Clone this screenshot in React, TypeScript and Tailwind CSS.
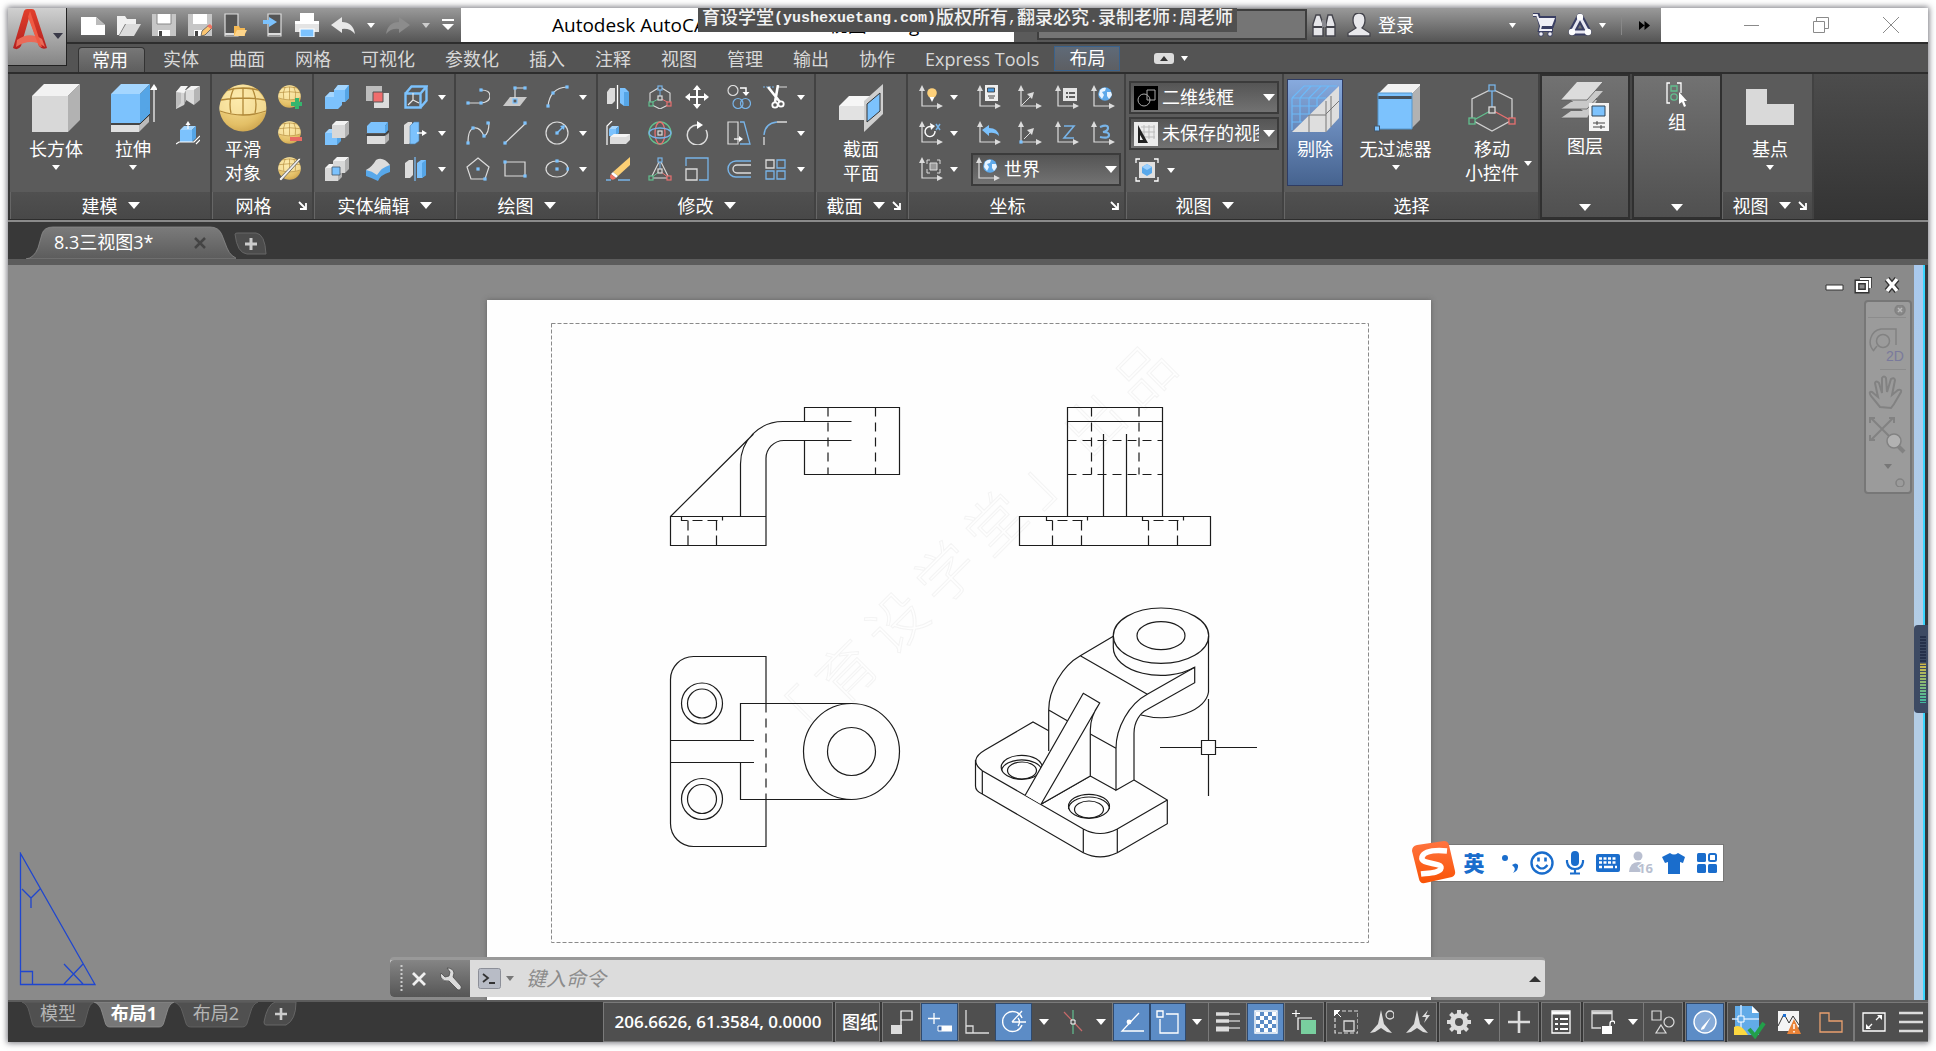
import type { ReactNode } from 'react'
import clsx from 'clsx'

const BLUE = '#7cc2fd'
const LINE = '#78b4e8'
const LIGHT = '#dcdcdc'
const GREEN = '#62c08f'
const RED = '#e87070'

type IconProps = { children: ReactNode; size?: number; box?: number }

function Icon({ children, size = 24, box = 24 }: IconProps) {
  return (
    <svg width={size} height={size} viewBox={`0 0 ${box} ${box}`} fill="none" className="shrink-0" aria-hidden="true">
      {children}
    </svg>
  )
}

function Tri({ w = 8, h = 5, color = '#fff' }: { w?: number; h?: number; color?: string }) {
  return (
    <svg width={w} height={h} viewBox="0 0 8 5" preserveAspectRatio="none" className="shrink-0" aria-hidden="true">
      <path d="M0 0h8L4 5z" fill={color} />
    </svg>
  )
}

function Dot({ x, y, c = BLUE }: { x: number; y: number; c?: string }) {
  return <rect x={x - 1.6} y={y - 1.6} width="3.2" height="3.2" fill={c} />
}

function Box({ x, y, c }: { x: number; y: number; c: string }) {
  return <rect x={x - 2} y={y - 2} width="4" height="4" fill="#5b5b5b" stroke={c} strokeWidth="1.2" />
}

function Cube({ x, y, s, d, c = 'blue' }: { x: number; y: number; s: number; d: number; c?: 'blue' | 'grey' }) {
  const [front, top, side] = c === 'blue' ? [BLUE, '#a4d6ff', '#55a5e6'] : ['#d8d8d8', '#f2f2f2', '#b2b2b2']
  return (
    <g>
      <path d={`M${x} ${y + d}h${s}v${s}h${-s}z`} fill={front} />
      <path d={`M${x} ${y + d}l${d} ${-d}h${s}l${-d} ${d}z`} fill={top} />
      <path d={`M${x + s} ${y + d}l${d} ${-d}v${s}l${-d} ${d}z`} fill={side} />
    </g>
  )
}

function Ball() {
  return (
    <g>
      <circle cx="24" cy="24" r="23.5" fill="url(#gold)" />
      <path d="M1 28a60 24 0 0 1 0-8C4 10 13 1 24 .6 35 1 44 10 47 20v8q-11 3-23 3T1 28z" fill="#fff0b8" opacity=".55" />
      <path d="M24 4v27M15 4q-6 12-3 25M33 4q6 12 3 25M2 16q22-4 44 0M9 6q15-4 30 0M1 27q23 8 46 0" stroke="#b08838" strokeWidth="1.3" />
    </g>
  )
}

function SmallBall({ children }: { children: ReactNode }) {
  return (
    <Icon>
      <g transform="scale(.48)">
        <Ball />
      </g>
      {children}
    </Icon>
  )
}

function Axes({ children }: { children?: ReactNode }) {
  return (
    <Icon>
      <path d="M3 5v16h16" stroke={LIGHT} strokeWidth="1.2" />
      <path d="M0 6l3-6 3 6zM18 18l6 3-6 3z" fill={LIGHT} />
      {children}
    </Icon>
  )
}

function Globe() {
  return (
    <g>
      <circle cx="14" cy="9" r="6.8" fill="#5ea9ea" />
      <path d="M9 5q3-3 6-2l-1 3-3 1 2 3-2 4-3-4zM16 7l4 0 1 3-3 4-2-3z" fill="#e8f4ff" />
    </g>
  )
}

const modelSmall = [
  { label: '多段体', icon: <Icon><path d="M0 7v17l8-4 2-5h8V5H9z" fill="#d4d4d4" /><path d="M0 7l5-6v17l-5 6z" fill="#bdbdbd" /><path d="M18 5l6-4v14l-6 5z" fill="#b5b5b5" /><path d="M8 20V9l2-4v10z" fill="#a8a8a8" /><path d="M0 7l5-6h7l-3 4h9l6-4h-9l-5 4-2 3-8-1z" fill="#f4f4f4" /><path d="M10 5h8v15l-8-5z" fill={LIGHT} /></Icon> },
  { label: '按住并拖动', icon: <Icon><Cube x={4} y={5} s={12} d={4} /><path d="M12 8V2M0 23l3-2h15l6-6M20 23l4-4" stroke="#fff" strokeWidth="1.2" /><path d="M9.500 4L12 0l2.500 4z" fill="#fff" /></Icon> },
]

const meshSmall = [
  { label: '提高平滑度', icon: <SmallBall><path d="M17 13h4v4h3.500v4H21v3.500h-4V21h-4v-4h4z" fill="#35b56e" /></SmallBall> },
  { label: '降低平滑度', icon: <SmallBall><path d="M12 16h12v4H12z" fill="#e96a63" /></SmallBall> },
  { label: '优化网格', icon: <SmallBall><path d="M1 22L21 1l2 1L3 24z" fill="#eee" stroke="#555" strokeWidth=".8" /></SmallBall> },
]

const solidEdit = [
  { label: '并集', icon: <Icon><path d="M0 12l5-5h4V5l4-5h11v13l-4 4h-3v3l-4 4H0z" fill={BLUE} /><path d="M9 5l4-5h11l-4 5zM0 12l5-5h4v5z" fill="#a4d6ff" /><path d="M20 5l4-5v13l-4 4z" fill="#55a5e6" /></Icon> },
  { label: '差集', icon: <Icon><path d="M0 1h16v15H0z" fill="#bdbdbd" /><path d="M8 8h15v15H8z" fill={LIGHT} /><path d="M7 7h10v10H7z" fill="#f06d6d" stroke="#555" /></Icon> },
  { label: '提取边', icon: <Icon><path d="M1.500 8.500h15v14h-15zM1.500 8.500l6-7h15l-6 7M22.500 1.500v14l-6 7" stroke={BLUE} strokeWidth="2.400" /><path d="M9 8v7l-5 5M9 15l6 3" stroke="#e8e8e8" strokeWidth="1.200" /></Icon> },
  { label: '交集', icon: <Icon><Cube x={0} y={8} s={12} d={4} /><Cube x={7} y={0} s={13} d={4} c="grey" /></Icon> },
  { label: '剖切', icon: <Icon><path d="M1 5l4-4h17l-3 4v7H1z" fill={BLUE} /><path d="M19 5l3-4v8l-3 4z" fill="#55a5e6" /><path d="M1 15h18v8H1z" fill={LIGHT} /><path d="M19 15l4-3v7l-4 4z" fill="#b2b2b2" /><path d="M0 14h18l5-4" stroke="#333" /></Icon> },
  { label: '拉伸面', icon: <Icon><path d="M0 4l4-3h4v20l-3 2H0z" fill={LIGHT} /><path d="M6 5l4-4h5v19l-4 3H6z" fill={BLUE} stroke="#4c7fae" strokeWidth=".6" /><path d="M13 12h7" stroke="#fff" strokeWidth="1.400" /><path d="M18 9l5 3-5 3z" fill="#fff" /></Icon> },
  { label: '干涉', icon: <Icon><Cube x={0} y={7} s={13} d={4} c="grey" /><Cube x={8} y={0} s={12} d={4} c="grey" /><path d="M7 10h8v8H7z" fill={BLUE} stroke="#456" strokeWidth=".8" /></Icon> },
  { label: '加厚', icon: <Icon><path d="M0 13v6q6 2 12 5 2-6 12-9V8z" fill="#58a8ea" /><path d="M0 13Q6 10 10 3q7-4 14 5-8 2-13 10-5-4-11-5z" fill={LIGHT} /></Icon> },
  { label: '分割', icon: <Icon><path d="M1 6l4-3h4v15l-3 3H1z" fill={LIGHT} /><path d="M13 6l4-3h5v15l-4 3h-5z" fill={BLUE} /><path d="M18 6l4-3v15l-4 3z" fill="#55a5e6" /><path d="M11 0v24" stroke={BLUE} strokeWidth="1.200" /></Icon> },
]

const draw = [
  { label: '多段线', icon: <Icon><path d="M2 18h13q9-1 9-7t-9-6" stroke={LIGHT} strokeWidth="1.200" /><Dot x={2} y={18} /><Dot x={15} y={18} /><Dot x={15} y={5} /></Icon> },
  { label: '平面曲面', icon: <Icon><path d="M7 12h17l-7 9H0z" fill="#c9c9c9" /><path d="M12 15V3h10" stroke={LIGHT} strokeWidth="1.200" /><Dot x={12} y={3} /><Dot x={22} y={3} /><Box x={12} y={16} c={BLUE} /></Icon> },
  { label: '圆弧', icon: <Icon><path d="M3 21Q5 3 22 2" stroke={LIGHT} strokeWidth="1.200" /><Dot x={3} y={21} /><Dot x={8} y={8} /><Dot x={22} y={2} /></Icon> },
  { label: '样条曲线', icon: <Icon><path d="M2 22Q2 8 8 7t10 8q5-2 5-14" stroke={LIGHT} strokeWidth="1.200" /><Dot x={2} y={22} /><Dot x={7} y={7} /><Dot x={18} y={15} /><Dot x={22} y={2} /></Icon> },
  { label: '直线', icon: <Icon><path d="M2 22L23 2" stroke={LIGHT} strokeWidth="1.200" /><Dot x={2} y={22} /><Dot x={22} y={2} /></Icon> },
  { label: '圆', icon: <Icon><circle cx="12" cy="12" r="11" stroke={LIGHT} strokeWidth="1.200" /><path d="M12 12l6-6" stroke={BLUE} strokeWidth="1.400" /><path d="M15 5l5-1-1 5z" fill={BLUE} /><Dot x={12} y={12} /></Icon> },
  { label: '多边形', icon: <Icon><path d="M12 1l11 9-4 12H5L1 10z" stroke={LIGHT} strokeWidth="1.200" /><Dot x={12} y={12} /><Dot x={19} y={22} /></Icon> },
  { label: '矩形', icon: <Icon><path d="M2 5h20v14H2z" stroke={LIGHT} strokeWidth="1.200" /><Dot x={2} y={5} /><Dot x={22} y={19} /></Icon> },
  { label: '椭圆', icon: <Icon><ellipse cx="12" cy="12" rx="11" ry="8" stroke={LIGHT} strokeWidth="1.200" /><Dot x={12} y={12} /><Dot x={12} y={4} /><Dot x={23} y={12} /></Icon> },
]

const modify = [
  { label: '三维镜像', icon: <Icon><path d="M1 7l3-4h5v13l-3 3H1z" fill={LIGHT} /><path d="M14 3h5l4 4v14h-5l-4-3z" fill={BLUE} /><path d="M18 7h5v14h-5z" fill="#55a5e6" /><path d="M11.500 0v24" stroke="#fff" strokeWidth="1.300" /></Icon> },
  { label: '三维移动', icon: <Icon><path d="M12 2l10 6v11l-10 5-10-5V8z" stroke={LIGHT} strokeWidth="1.100" /><path d="M12 4v8" stroke={LINE} /><path d="M12 13l9 5" stroke={RED} /><path d="M12 13l-9 5" stroke={GREEN} /><Box x={12} y={3} c={LINE} /><Box x={12} y={13} c={LIGHT} /><Box x={3} y={19} c={GREEN} /><Box x={21} y={19} c={RED} /></Icon> },
  { label: '移动', icon: <Icon><path d="M12 3v18M3 12h18" stroke="#fff" strokeWidth="2" /><path d="M8 5l4-5 4 5zM8 19l4 5 4-5zM5 8l-5 4 5 4zM19 8l5 4-5 4z" fill="#fff" /></Icon> },
  { label: '复制', icon: <Icon><circle cx="6" cy="5.500" r="5" stroke={LIGHT} strokeWidth="1.200" /><circle cx="11" cy="18.500" r="5" stroke={LINE} strokeWidth="1.200" /><circle cx="18.500" cy="18.500" r="5" stroke={LINE} strokeWidth="1.200" /><path d="M13 3h6v5" stroke="#fff" strokeWidth="1.500" /><path d="M15.500 7h7L19 11z" fill="#fff" /></Icon> },
  { label: '修剪', icon: <Icon><path d="M0 2h12" stroke={LINE} strokeDasharray="2 1" /><path d="M14 2h10" stroke={LIGHT} /><path d="M5 2l12 15M15 0l-3 17" stroke="#fff" strokeWidth="2.600" /><circle cx="12" cy="20" r="2.700" stroke="#fff" strokeWidth="1.800" /><circle cx="18" cy="19" r="2.700" stroke="#fff" strokeWidth="1.800" /></Icon> },
  { label: '三维对齐', icon: <Icon><path d="M1 24V5l5-5" stroke="#fff" strokeWidth="1.200" /><Cube x={3} y={5} s={7} d={3} /><path d="M4 16l4-3h16v6l-4 4H4z" fill={LIGHT} /><path d="M4 16l4-3h16l-4 3z" fill="#f4f4f4" /></Icon> },
  { label: '三维旋转', icon: <Icon><circle cx="12" cy="12" r="11" stroke={GREEN} strokeWidth="1.300" /><ellipse cx="12" cy="12" rx="5" ry="11" stroke={RED} strokeWidth="1.300" /><ellipse cx="12" cy="12" rx="11" ry="5" stroke={LINE} strokeWidth="1.300" /><Box x={12} y={12} c={LIGHT} /></Icon> },
  { label: '旋转', icon: <Icon><path d="M15 4h-2a10 10 0 1 0 8 5" stroke={LIGHT} strokeWidth="1.500" /><path d="M12 0l6 4-6 4z" fill="#fff" /></Icon> },
  { label: '拉伸', icon: <Icon><path d="M1 1h10v22H1z" stroke={LIGHT} strokeWidth="1.200" /><path d="M13 1h4l6 22H13" stroke={LINE} strokeWidth="1.300" /><path d="M7 18h6" stroke="#fff" strokeWidth="1.300" /><path d="M12 15l4 3-4 3z" fill="#fff" /></Icon> },
  { label: '圆角', icon: <Icon><path d="M1 24V16M14 1h10" stroke={LIGHT} strokeWidth="1.300" /><path d="M1 14Q2 2 14 1" stroke={LINE} strokeWidth="1.400" /></Icon> },
  { label: '删除', icon: <Icon><path d="M0 23h5M12 23h12" stroke={LINE} strokeWidth="1.300" /><path d="M24 0v8L12 19l-5-4z" fill="#fccf74" /><path d="M7 15l5 4-2 2-5-4z" fill="#fff" /><path d="M5 17l5 4q-3 3-5 1t0-5z" fill="#ef7565" /></Icon> },
  { label: '三维缩放', icon: <Icon><path d="M12 3L3 21h18z" stroke={LIGHT} strokeWidth="1.100" /><path d="M12 4v9" stroke={LINE} /><path d="M12 14l9 7" stroke={RED} /><path d="M12 14l-9 7" stroke={GREEN} /><Box x={12} y={3} c={LINE} /><Box x={12} y={14} c={LIGHT} /><Box x={3} y={21} c={GREEN} /><Box x={21} y={21} c={RED} /></Icon> },
  { label: '缩放', icon: <Icon><path d="M1 9V1h22v22h-9" stroke={LINE} strokeWidth="1.300" /><path d="M1 12h11v11H1z" stroke={LIGHT} strokeWidth="1.300" /></Icon> },
  { label: '偏移', icon: <Icon><path d="M24 4H9a8 8 0 0 0 0 16h15" stroke={LINE} strokeWidth="1.400" /><path d="M24 8H10a4 4 0 0 0 0 8h14" stroke={LIGHT} strokeWidth="1.400" /></Icon> },
  { label: '阵列', icon: <Icon><path d="M3 3h8v8H3z" stroke={LIGHT} strokeWidth="1.300" /><path d="M14 3h8v8h-8zM3 14h8v8H3zM14 14h8v8h-8z" stroke={LINE} strokeWidth="1.300" /></Icon> },
]

const coords = [
  { label: 'UCS 图标', icon: <Axes><circle cx="13" cy="8" r="4.800" fill="#fdd07a" /><path d="M10.500 12h5l-2.500 5z" fill="#fff" /></Axes> },
  null,
  { label: 'UCS 特性', icon: <Axes><path d="M8 0h13v16H8z" fill="#eee" /><path d="M10.500 3h7v4h-7z" fill="#4b9be0" stroke="#333" strokeWidth=".8" /><path d="M11 11h7M12 13h5" stroke="#444" /></Axes> },
  { label: '三点', icon: <Axes><path d="M4 20L14 10" stroke={LIGHT} /><path d="M9 9l7-2-2 7z" fill={LIGHT} /></Axes> },
  { label: '命名 UCS', icon: <Axes><path d="M8 3h14v13H8z" fill="#e4e4e4" /><path d="M11 8h2M14 8h6M11 12h2M14 12h6" stroke="#333" strokeWidth="1.400" /></Axes> },
  { label: '世界', icon: <Axes><Globe /></Axes> },
  { label: '绕 X 轴', icon: <Axes><path d="M13 6a5 5 0 1 0 3 4" stroke="#fff" strokeWidth="1.400" /><path d="M11 2l5 3-4 4z" fill="#fff" /><path d="M17 3l4 6M21 3l-4 6" stroke={LINE} strokeWidth="1.500" /></Axes> },
  null,
  { label: '上一个', icon: <Axes><path d="M5 9l7-5v3q9 0 10 8-4-4-10-3v3z" fill={BLUE} /></Axes> },
  { label: '原点', icon: <Axes><path d="M6 18l8-8" stroke={LIGHT} /><path d="M9 9l7-2-2 7z" fill={LIGHT} /><Dot x={3} y={21} /></Axes> },
  { label: 'Z 轴矢量', icon: <Axes><path d="M9 5h10L9 17h10" stroke={LINE} strokeWidth="1.600" /></Axes> },
  { label: '3 点', icon: <Axes><path d="M9 6q8-3 8 1 0 3-5 4 6 0 6 3 0 4-9 2" stroke={LINE} strokeWidth="2.200" /></Axes> },
  { label: '视图', icon: <Axes><path d="M11 6h7v7h-7z" fill="#999" stroke={LIGHT} /><path d="M8 7V3h3M18 3h3v4M21 12v4h-3M11 16H8v-4" stroke={LIGHT} /></Axes> },
  null,
]

const menuTabs = ['常用', '实体', '曲面', '网格', '可视化', '参数化', '插入', '注释', '视图', '管理', '输出', '协作', 'Express Tools', '布局']

const quickAccess = [
  { label: '新建', icon: <Icon><path d="M0 4h15l9 8v10H0z" fill="#fff" /><path d="M15 4v8h9z" fill="#bbb" /></Icon> },
  { label: '打开', icon: <Icon><path d="M0 3h8l2 3h9v5H8L2 22H0z" fill="#f0f0f0" /><path d="M9 11h15l-7 12H2z" fill="#dcdcdc" /></Icon> },
  { label: '保存', icon: <Icon><path d="M0 1h24v22H0z" fill="#c6c6c6" /><path d="M5 1h14v10H5zM6 17h12v6H6z" fill="#fff" /><path d="M7 18h3v5H7z" fill="#444" /><path d="M5 1v10h14V1" stroke="#888" /></Icon> },
  { label: '另存为', icon: <Icon><path d="M0 1h24v22H0z" fill="#c6c6c6" /><path d="M5 1h14v10H5zM6 17h8v6H6z" fill="#fff" /><path d="M7 18h3v5H7z" fill="#444" /><path d="M13 23l1-5 7-6 3 3-7 7z" fill="#fcc672" stroke="#555" strokeWidth=".8" /><path d="M19 13l3-2 3 3-2 2z" fill="#ee7464" /></Icon> },
  { label: '从移动设备打开', icon: <Icon><path d="M1 1h13v22H1z" fill="#555" stroke="#ddd" strokeWidth="1.200" /><path d="M1 21h13" stroke="#ddd" strokeWidth="2" /><path d="M10 13h5l1 2h5v8H10z" fill="#f5b954" /><path d="M13 17h10l-3 6H10z" fill="#fdd58b" /></Icon> },
  { label: '保存到移动设备', icon: <Icon><path d="M8 1h13v22H8z" fill="#555" stroke="#ddd" strokeWidth="1.200" /><path d="M8 21h13" stroke="#ddd" strokeWidth="2" /><path d="M3 7h6V4l8 5-8 5v-3H3z" fill={BLUE} /></Icon> },
  { label: '打印', icon: <Icon><path d="M5 0h14v10H5z" fill="#fff" /><path d="M0 8h24v11H0z" fill="#e4e4e4" /><path d="M0 8h24v3H0z" fill="#fff" /><path d="M5 16h14v8H5z" fill={BLUE} stroke="#fff" strokeWidth="1.200" /></Icon> },
  { label: '放弃', icon: <Icon><path d="M0 12l11-8v5q11 0 13 12-5-6-13-5v4z" fill="#e8e8e8" /></Icon> },
]

function ToolBtn({ label, children, className }: { label: string; children: ReactNode; className?: string }) {
  return (
    <button type="button" aria-label={label} className={clsx('flex shrink-0 items-center justify-center', className)}>
      {children}
    </button>
  )
}

function BigButton({ icon, lines, arrow, className }: { icon: ReactNode; lines: string[]; arrow?: boolean; className?: string }) {
  return (
    <button type="button" className={clsx('flex flex-col items-center pt-[10px] text-center', className)}>
      {icon}
      <span className="mt-[5px] whitespace-nowrap leading-6">
        {lines.map((l) => (
          <span key={l} className="block">{l}</span>
        ))}
      </span>
      {arrow && <span className="mt-[4px] flex"><Tri /></span>}
    </button>
  )
}

type PanelProps = { title: string; arrow?: boolean; launcher?: boolean; className: string; body?: string; children: ReactNode }

function Panel({ title, arrow, launcher, className, body, children }: PanelProps) {
  return (
    <section className={clsx('flex shrink-0 flex-col border-r-2 border-[#424242] bg-[#5b5b5b]', className)}>
      <div className={clsx('flex-1', body ?? 'flex')}>{children}</div>
      <div className="flex h-[27px] items-center border-l border-[#666] bg-linear-to-b from-[#505050] to-[#484848] px-1">
        <button type="button" className={clsx('flex flex-1 items-center justify-center gap-[10px] whitespace-nowrap leading-6', launcher && !arrow && 'pr-[6px]')}>
          {title}
          {arrow && <Tri w={12} h={7} />}
        </button>
        {launcher && (
          <ToolBtn label={`${title}设置`} className="size-3">
            <svg width="9" height="9" viewBox="0 0 9 9" fill="none"><path d="M1 1l6 6M8 2v6H2" stroke="#fff" strokeWidth="1.800" /></svg>
          </ToolBtn>
        )}
      </div>
    </section>
  )
}

function SmallArrow({ label }: { label: string }) {
  return <ToolBtn label={label} className="h-6 w-3"><Tri /></ToolBtn>
}

function Combo({ label, value, icon, className }: { label: string; value: string; icon: ReactNode; className?: string }) {
  return (
    <label className={clsx('relative flex h-[33px] items-center gap-1 border-2 border-[#3b3b3b] bg-linear-to-b from-[#555] to-[#727272] pl-[3px]', className)}>
      {icon}
      <select aria-label={label} className="mr-[18px] h-full min-w-0 flex-1 appearance-none overflow-hidden bg-transparent whitespace-nowrap outline-none">
        <option>{value}</option>
      </select>
      <span className="pointer-events-none absolute right-[2px] flex"><Tri w={12} h={7} /></span>
    </label>
  )
}

const rows3 = ['row-1', 'row-2', 'row-3']

function withArrows(items: { label: string; icon: ReactNode }[], perRow: number) {
  return rows3.map((r, i) => [
    ...items.slice(i * perRow, (i + 1) * perRow).map((t) => <ToolBtn key={t.label} label={t.label}>{t.icon}</ToolBtn>),
    <SmallArrow key={r} label="更多" />,
  ])
}

function Ribbon() {
  return (
    <div className="flex h-[145px] bg-linear-to-b from-[#4c4c4c] to-[#343434] pl-[2px] text-[18px] text-white">
      <Panel title="建模" arrow className="w-[202px]">
        <BigButton className="ml-2 w-[76px]" lines={['长方体']} arrow icon={<Icon size={48} box={48}><Cube x={0} y={0} s={36} d={12} c="grey" /></Icon>} />
        <BigButton className="w-[78px]" lines={['拉伸']} arrow icon={<Icon size={48} box={48}><path d="M2 41h28v7H2z" fill="#e0e0e0" /><path d="M30 41l10-9v6l-10 10z" fill="#bbb" /><Cube x={2} y={0} s={29} d={10} /><path d="M2 30h29v9H2z" fill={BLUE} /><path d="M31 30l10-8v8l-10 9z" fill="#55a5e6" /><path d="M2 40h29l10-10" stroke="#333" /><path d="M45 5v33" stroke="#fff" strokeWidth="1.200" /><path d="M41 6l4-6 4 6z" fill="#fff" /></Icon>} />
        <div className="flex flex-col gap-3 pt-[11px] pl-1">
          {modelSmall.map((t) => <ToolBtn key={t.label} label={t.label}>{t.icon}</ToolBtn>)}
        </div>
      </Panel>

      <Panel title="网格" launcher className="w-[102px]">
        <BigButton className="w-[62px]" lines={['平滑', '对象']} icon={<Icon size={48} box={48}><Ball /></Icon>} />
        <div className="flex flex-col gap-3 pt-[11px] pl-1">
          {meshSmall.map((t) => <ToolBtn key={t.label} label={t.label}>{t.icon}</ToolBtn>)}
        </div>
      </Panel>

      <Panel title="实体编辑" arrow className="w-[142px]" body="grid grid-cols-[41px_38px_32px_12px] auto-rows-[36px] items-center justify-items-start pt-[5px] pl-[11px]">
        {withArrows(solidEdit, 3)}
      </Panel>

      <Panel title="绘图" arrow className="w-[142px]" body="grid grid-cols-[37px_42px_32px_12px] auto-rows-[36px] items-center justify-items-start pt-[5px] pl-[10px]">
        {withArrows(draw, 3)}
      </Panel>

      <Panel title="修改" arrow className="w-[218px]" body="grid grid-cols-[42px_37px_42px_36px_32px_12px] auto-rows-[36px] items-center justify-items-start pt-[5px] pl-[8px]">
        {withArrows(modify, 5)}
      </Panel>

      <Panel title="截面" arrow launcher className="w-[92px]" body="flex justify-center">
        <BigButton lines={['截面', '平面']} icon={<Icon size={48} box={48}><path d="M2 22h26v14H2z" fill="#e2e2e2" /><path d="M2 22l10-10h24L27 22z" fill="#f6f6f6" /><path d="M27 17L46 0v30L27 48z" fill="#cfcfcf" /><path d="M30 20l13-11v18L30 38z" fill={BLUE} stroke="#333" /></Icon>} />
      </Panel>

      <Panel title="坐标" launcher className="w-[218px]" body="grid grid-cols-[29px_29px_41px_37px_36px_24px] auto-rows-[36px] items-center justify-items-start pt-[5px] pl-[11px]">
        {coords.map((t, i) => (t ? <ToolBtn key={t.label} label={t.label}>{t.icon}</ToolBtn> : <SmallArrow key={i} label="更多" />))}
        <Combo label="当前 UCS" value="世界" className="col-span-4 -ml-[6px] w-[150px]" icon={<Axes><Globe /></Axes>} />
      </Panel>

      <Panel title="视图" arrow className="w-[158px]" body="flex flex-col items-start gap-[3px] pt-[7px] pl-[3px]">
        <Combo label="视觉样式" value="二维线框" className="w-[150px]" icon={<Icon><path d="M0 0h24v24H0z" fill="#000" /><circle cx="10" cy="14" r="6" stroke="#aaa" /><path d="M13 4h8v10h-8z" stroke="#aaa" /></Icon>} />
        <Combo label="视图" value="未保存的视图" className="w-[150px]" icon={<Icon><path d="M0 0h24v24H0z" fill="#ececec" /><path d="M7 5h14M7 10h14M7 15h14M10 3v14M15 3v14M20 3v14" stroke="#bbb" /><path d="M4 3l10 18H4z" fill="#222" /><path d="M6 13l3 5H6z" fill="#eee" /></Icon>} />
        <div className="mt-[5px] ml-[6px] flex items-center gap-2">
          <ToolBtn label="命名视图"><Icon><path d="M4 4h16v16H4z" fill="#e0e0e0" /><path d="M12 6l5 3v6l-5 3-5-3V9z" fill="#58a8ea" /><path d="M12 6l5 3-5 3-5-3z" fill="#9ad0ff" /><path d="M1 5V1h4M19 1h4v4M23 19v4h-4M5 23H1v-4" stroke="#fff" strokeWidth="1.300" /></Icon></ToolBtn>
          <Tri />
        </div>
      </Panel>

      <Panel title="选择" className="w-[256px]" body="flex items-start">
        <button type="button" className="mt-[5px] ml-[3px] flex h-[107px] w-[56px] flex-col items-center border border-[#2f3c63] bg-linear-to-b from-[#87aade] to-[#46638f] pt-[4px]">
          <Icon size={48} box={48}>
            <path d="M1 48L48 2v32L35 48z" fill="#dedede" />
            <path d="M35 48V17M18 48V31h17M35 30l13-13M40 43V12" stroke="#777" />
            <path d="M1 14v32M1 14h34M1 14L13 2h33M9 14v24M18 14v16M26 14v8M1 22h26M1 30h18M1 38h10M9 14L20 2M18 14L30 2M26 14L38 2" stroke="#6db9f8" strokeWidth="1.200" />
          </Icon>
          <span className="mt-[5px] leading-6">剔除</span>
        </button>
        <BigButton className="ml-[14px] w-[77px]" lines={['无过滤器']} arrow icon={<Icon size={48} box={48}><Cube x={6} y={0} s={34} d={10} c="grey" /><path d="M6 9h34v36H6z" fill={BLUE} /><path d="M6 12h34v3H6z" fill="#46515c" /><path d="M6 9h34v36H6z" stroke="#5596cc" /><rect x="2.500" y="42" width="5" height="5" fill={BLUE} stroke="#456" /></Icon>} />
        <BigButton className="ml-5 w-[76px]" lines={['移动', '小控件']} icon={<Icon size={48} box={48}><path d="M24 5l20 10v21L24 47 4 36V15z" stroke="#cfcfcf" strokeWidth="1.300" /><path d="M24 4v22" stroke={LINE} strokeWidth="1.400" /><path d="M24 26l20 11" stroke={RED} strokeWidth="1.400" /><path d="M24 26L4 37" stroke={GREEN} strokeWidth="1.400" />{[[24, 4, LINE], [24, 26, LIGHT], [4, 37, GREEN], [44, 37, RED]].map(([x, y, c]) => <rect key={String(c)} x={Number(x) - 3} y={Number(y) - 3} width="6" height="6" fill="#5b5b5b" stroke={String(c)} strokeWidth="1.300" />)}</Icon>} />
        <span className="mt-[87px] -ml-[6px] flex"><Tri /></span>
      </Panel>

      <button type="button" className="flex w-[90px] shrink-0 flex-col items-center justify-between border-2 border-[#303030] bg-linear-to-b from-[#727272] to-[#505050] pt-[6px] pb-[6px]">
        <span className="flex flex-col items-center leading-6">
          <Icon size={50} box={50}><path d="M17 9h26L27 27H1l10-7h14l8-11M11 18h26L27 36H1l10-7h12z" fill="#c9c9c9" /><path d="M17 0h26L27 18H1z" fill={LIGHT} /><path d="M1 18h26L43 0M1 27h26l10-11M1 36h26" stroke="#5a5a5a" strokeWidth=".8" /><path d="M29 21h20v28H29z" fill="#f4f4f4" /><path d="M32 24h13v10H32z" fill={BLUE} stroke="#345" /><path d="M33 41h12M33 45h12M37 39v4M41 43v4" stroke="#444" /></Icon>
          <span className="mt-[2px]">图层</span>
        </span>
        <Tri w={12} h={7} />
      </button>
      <div className="w-[2px] bg-[#454545]" />
      <button type="button" className="flex w-[90px] shrink-0 flex-col items-center justify-between border-2 border-[#303030] bg-linear-to-b from-[#727272] to-[#505050] pt-[6px] pb-[6px]">
        <span className="flex flex-col items-center leading-6">
          <Icon size={26} box={26}><path d="M6 1H3v20h3M13 1h4v10" stroke="#fff" strokeWidth="1.300" /><path d="M7 4h6v5H7z" stroke={GREEN} strokeWidth="1.300" /><circle cx="10" cy="15" r="3.200" stroke={GREEN} strokeWidth="1.300" /><path d="M15 10l8 9h-3l2 5-2 1-2-5-3 2z" fill="#fff" /></Icon>
          <span className="mt-[2px]">组</span>
        </span>
        <Tri w={12} h={7} />
      </button>

      <Panel title="视图" arrow launcher className="w-[92px]" body="flex justify-center pl-[6px]">
        <BigButton lines={['基点']} arrow icon={<Icon size={48} box={48}><path d="M0 5h21v15h27v21H0z" fill="#d9d9d9" /></Icon>} />
      </Panel>
    </div>
  )
}

function TitleBar() {
  return (
    <div className="relative flex h-[34px] items-stretch bg-linear-to-b from-[#9a9a9a] to-[#555] pl-[73px] text-white">
      <div className="flex w-[380px] shrink-0 items-center justify-between pr-[7px]">
        {quickAccess.map((t) => <ToolBtn key={t.label} label={t.label}>{t.icon}</ToolBtn>)}
        <Tri />
        <ToolBtn label="重做"><Icon><path d="M24 12L13 4v5Q2 9 0 21q5-6 13-5v4z" fill="#8c8c8c" /></Icon></ToolBtn>
        <Tri color="#ccc" />
        <ToolBtn label="自定义快速访问工具栏"><svg width="12" height="12" viewBox="0 0 12 12"><path d="M0 0h12v2H0zM0 5h12l-6 6z" fill="#fff" /></svg></ToolBtn>
      </div>
      <div className="flex w-[553px] shrink-0 items-center overflow-hidden bg-white pl-[91px] text-[19px] whitespace-pre text-black">
        <h1>Autodesk AutoCAD 2020   8.3三视图3.dwg</h1>
      </div>
      <div className="flex w-[23px] bg-[#5b5b5b]" />
      <input aria-label="搜索" className="mt-[1px] mb-[2px] w-[270px] shrink-0 border-2 border-[#3e3e3e] bg-[#757575] outline-none" />
      <div className="flex flex-1 items-center pl-[4px]">
        <ToolBtn label="搜索帮助" className="w-[26px]"><Icon><path d="M4 2h4l3 9v12H1V11zM16 2h4l3 9v12h-9V11z" fill="#e6e6ea" stroke="#44444c" strokeWidth="1.400" /><path d="M10 7h4v7h-4z" fill="#88888f" /><path d="M1 14h9M14 14h9" stroke="#44444c" strokeWidth="2" /></Icon></ToolBtn>
        <a href="#signin" className="ml-[10px] flex items-center gap-[7px] text-[18px]">
          <Icon><path d="M12 0q6 0 6 7 0 5-3 8l8 5v3H1v-3l8-5q-3-3-3-8 0-7 6-7z" fill="#e8e8ec" stroke="#44444c" strokeWidth="1.300" /></Icon>
          登录
        </a>
        <div className="ml-auto flex items-center pr-[11px]">
          <Tri w={7} />
          <ToolBtn label="应用商店" className="ml-[16px]"><Icon><path d="M1 2h5l3 11h11l3-8H7M9 13l-1 4h13" stroke="#3a3f63" strokeWidth="4" /><path d="M6 5h17l-3 8H9z" fill="#f0f0f6" /><path d="M1 2h4l4 11-1 4h12" stroke="#f0f0f6" strokeWidth="1.800" /><circle cx="9" cy="21" r="2.300" fill="#f0f0f6" stroke="#3a3f63" /><circle cx="18" cy="21" r="2.300" fill="#f0f0f6" stroke="#3a3f63" /></Icon></ToolBtn>
          <ToolBtn label="保持连接" className="ml-[12px]"><Icon><path d="M12 4l8 15H4z" stroke="#3a3f63" strokeWidth="7" strokeLinejoin="round" /><path d="M12 4l8 15H4z" stroke="#e8e8f2" strokeWidth="3" strokeLinejoin="round" /><circle cx="12" cy="4" r="3.200" fill="#fff" /><circle cx="4" cy="19" r="3.200" fill="#fff" /><circle cx="20" cy="19" r="3.200" fill="#fff" /></Icon></ToolBtn>
          <span className="ml-[7px] flex"><Tri w={7} /></span>
          <span className="ml-[15px] h-5 w-px bg-[#888]" />
          <ToolBtn label="更多" className="ml-[17px]"><svg width="11" height="9" viewBox="0 0 11 9"><path d="M0 0l5.500 4.500L0 9zM5.500 0L11 4.500 5.500 9z" fill="#000" /></svg></ToolBtn>
        </div>
      </div>
      <div className="flex w-[267px] shrink-0 items-center bg-white pl-[83px]">
        <ToolBtn label="最小化" className="w-4"><svg width="16" height="16" stroke="#8a8a8a"><path d="M0 8.500h15" /></svg></ToolBtn>
        <ToolBtn label="还原" className="ml-[53px] w-4"><svg width="16" height="16" fill="none" stroke="#8a8a8a"><path d="M.5 4.500h11v11H.5zM3.500 4.500v-4h12v11h-4" /></svg></ToolBtn>
        <ToolBtn label="关闭" className="ml-[54px] w-4"><svg width="16" height="16" stroke="#8a8a8a"><path d="M0 0l16 16M16 0L0 16" /></svg></ToolBtn>
      </div>
      {/* copyright strip floating over the caption */}
      <p className="absolute top-0 left-[690px] flex h-6 items-center bg-[#505050] px-[4px] pb-[2px] font-['Liberation_Mono','Noto_Sans_CJK_SC',monospace] text-[18px] font-medium whitespace-nowrap text-[#f2f2f2]">
        育设学堂<span className="text-[15px] font-bold">(yushexuetang.com)</span>版权所有<span className="text-[15px]">,</span>翻录必究<span className="text-[15px]">.</span>录制老师<span className="text-[15px]">:</span>周老师
      </p>
    </div>
  )
}

function MenuBar() {
  return (
    <nav className="flex h-[32px] items-end border-y-2 border-[#2d2d2d] bg-[#545454] pl-[70px] text-[18px] text-[#d8d8d8]">
      {menuTabs.map((t, i) => (
        <button
          key={t}
          type="button"
          className={clsx(
            'h-[25px] border leading-[21px] whitespace-nowrap',
            i === 0 ? 'mr-[3px] rounded-t-sm border-b-0 border-[#333] bg-linear-to-b from-[#777] to-[#5e5e5e] pr-[16px] pl-[13px] text-white' : 'px-[14px]',
            t === '布局' && 'mb-px border-[#3a628c] bg-linear-to-b from-[#5f6a78] to-[#5d5f63] text-white',
            i > 0 && t !== '布局' && 'border-transparent',
          )}
        >
          {t}
        </button>
      ))}
      <button type="button" aria-label="最小化功能区" className="mb-[8px] ml-[34px] flex h-[11px] w-[20px] items-center justify-center rounded-[3px] bg-[#dcdcdc]">
        <svg width="8" height="5"><path d="M0 5h8L4 0z" fill="#333" /></svg>
      </button>
      <span className="mb-[11px] ml-[7px] flex"><Tri w={7} /></span>
    </nav>
  )
}

function FileTabs() {
  return (
    <div className="flex h-[43px] items-start border-b-[6px] border-[#5c5c5c] bg-[#383838] pt-[4px] pl-[18px]">
      <div className="relative flex h-[33px] w-[210px] items-center">
        <svg className="absolute inset-0" width="210" height="33" viewBox="0 0 210 33" aria-hidden="true">
          <path d="M0 33Q8 32 12 22L16 8Q18 1 27 1H184Q193 1 196 9L201 22Q205 32 214 33z" fill="url(#tab)" stroke="#8a8a8a" strokeWidth=".8" />
        </svg>
        <span className="relative pl-[28px] text-[18px] text-white">8.3三视图3*</span>
        <button type="button" aria-label="关闭图形" className="relative mr-[24px] ml-auto p-[6px]">
          <svg width="12" height="12" fill="none" stroke="#444" strokeWidth="2.500"><path d="M1 1l10 10M11 1L1 11" /></svg>
        </button>
      </div>
      <button type="button" aria-label="新图形" className="mt-[6px] ml-[-2px]">
        <svg width="33" height="23" fill="none"><path d="M1 2q0-1 3-1h18q9 1 10 21H13Q3 21 1 2z" fill="#4c4c4c" stroke="#666" /><path d="M17 6v12M11 12h12" stroke="#ccc" strokeWidth="3" /></svg>
      </button>
    </div>
  )
}

function Drawing() {
  return (
    <svg width="944" height="740" viewBox="487 300 944 740" className="block bg-[#fefefe]" fill="none" stroke="#1c1c1c" strokeWidth="1.200" role="img" aria-label="三视图">
      <text transform="translate(792 757) rotate(-45)" fontSize="58" fontFamily="'Noto Sans CJK SC', sans-serif" fontWeight="300" letterSpacing="12" fill="none" stroke="#f4f4f4" strokeWidth="1">「育设学堂」出品</text>
      <rect x="551.500" y="323.500" width="817" height="619" stroke="#8a8a8a" strokeWidth="1" strokeDasharray="4 2" />

      {/* front view */}
      <path d="M804.500 421.500V407.500H899.500V474.500H804.500V440.500" />
      <path d="M828 407.500V474.500M875.500 407.500V474.500" strokeDasharray="9 6" />
      <path d="M851.500 421.500H783A42.500 42.500 0 0 0 740.500 464V516.500M851.500 440.500H784A18 18 0 0 0 766 459V545.500H670.500V516.500H766M670.500 516.500L753.500 434" />
      <path d="M681.500 516.500V520.500H722.500V516.500M688 520.500V545M716.500 520.500V545" strokeDasharray="10 5" />

      {/* side view */}
      <path d="M1067.500 516.500V407.500H1162.500V516.500M1067.500 421.500H1162.500M1103.500 434V516.500M1126.500 434V516.500M1019.500 516.500H1210.500V545.500H1019.500z" />
      <path d="M1091.500 407.500V474.500M1139 407.500V474.500M1067.500 440.500H1162.500M1067.500 474.500H1162.500" strokeDasharray="9 6" />
      <path d="M1046.500 516.500V520.500H1087.500V516.500M1142.500 516.500V520.500H1183.500V516.500M1052.500 520.500V545M1081.500 520.500V545M1148.500 520.500V545M1177.500 520.500V545" strokeDasharray="10 5" />

      {/* top view */}
      <path d="M766 703.500V656.500H693.500A23 23 0 0 0 670.500 679.500V823.500A23 23 0 0 0 693.500 846.500H766V799.500" />
      <path d="M766 703.500V799.500" strokeDasharray="9 6" />
      <path d="M670.500 740.500H754M670.500 762.500H754M740.500 740.500V703.500H851.500M740.500 762.500V799.500H851.500" />
      <circle cx="851.500" cy="751.500" r="48" />
      <circle cx="851.500" cy="751.500" r="24" />
      <circle cx="702" cy="703.500" r="20.500" />
      <circle cx="702" cy="703.500" r="14.500" />
      <circle cx="702" cy="799" r="20.500" />
      <circle cx="702" cy="799" r="14.500" />

      {/* isometric view */}
      <ellipse cx="1161" cy="635.700" rx="47.700" ry="27.700" />
      <ellipse cx="1161" cy="635.700" rx="24" ry="14" />
      <path d="M1113.300 635.700V647.500A47.700 27.700 0 0 0 1194.700 667.300M1208.500 635.700V692A47.700 27.700 0 0 1 1141 715" />
      <path d="M1113.300 636.300L1080.300 655.700C1062 666 1048.700 690 1048.700 710V751M1080.300 655.700L1147.300 694.300M1048.700 710L1067.300 720.700" />
      <path d="M1194.700 667.300L1147.300 694.300C1129 704 1116 728 1116 748.300V790.300L1134 780V733.300C1134 722 1140 713 1146.700 709.700L1194.700 682.700z" />
      <path d="M1090.300 734L1116 748.300M1090.300 776L1116 790.300M1090.300 776L1041 804.300M1134 780L1167.300 800V823.700L1117.300 852.700Q1100 861 1083.300 852.700L982.300 794Q975.500 791 975.500 786V760" />
      <path d="M1167.300 800L1117.300 829Q1100 838 1083.300 829L982.300 770.700Q968 760 985 750L1033 722 1048.700 730.700M982.300 770.700V794M1083.300 829V852.700M1117.300 829V852.700" />
      <ellipse cx="1021.700" cy="767.300" rx="20.500" ry="12" />
      <path d="M1001.500 770A20.500 12 0 0 1 1042 770" />
      <ellipse cx="1022" cy="770.500" rx="14.500" ry="8.500" />
      <ellipse cx="1089" cy="806.300" rx="20.500" ry="12" />
      <path d="M1068.500 809A20.500 12 0 0 1 1109.500 809" />
      <ellipse cx="1089" cy="809.500" rx="14.500" ry="8.500" />
      <path d="M1083.300 693.300L1099.700 703C1092 714 1090.300 722 1090.300 730V776L1041 804.300 1025.300 795z" fill="#fefefe" stroke="none" />
      <path d="M1025.300 795L1083.300 693.300 1099.700 703 1041 804.300M1099.700 703C1092 714 1090.300 722 1090.300 730V776L1041 804.300" />

      {/* crosshair */}
      <path d="M1160 747.500H1201.500M1215.500 747.500H1257M1208.500 699V740.500M1208.500 754.500V796M1201.500 740.500h14v14h-14z" />
    </svg>
  )
}

function Ime() {
  const c = '#1a6dcc'
  const items = [
    { label: '中英文标点', icon: <><circle cx="8" cy="7" r="3" fill={c} /><path d="M15 14q4-3 6 0 1 5-5 8 3-4 1-6z" fill={c} /></> },
    { label: '表情', icon: <><circle cx="12" cy="12" r="10.500" stroke={c} strokeWidth="2.400" /><path d="M8.500 6.500v4M15.500 6.500v4" stroke={c} strokeWidth="2.600" /><path d="M6.500 14q5.500 7 11 0" stroke={c} strokeWidth="2.200" /></> },
    { label: '语音', icon: <><rect x="8" y="0" width="8" height="15" rx="4" fill={c} /><path d="M4 9v2q1 7 8 7t8-7V9M12 18v4M7 22.500h10" stroke={c} strokeWidth="2.200" /></> },
    { label: '软键盘', icon: <><rect x="0" y="3" width="24" height="18" rx="2" fill={c} /><path d="M3 7.500h18M3 11.500h18" stroke="#fff" strokeWidth="2.400" strokeDasharray="3 1.500" /><path d="M3 16h3M8 16h9M19 16h2" stroke="#fff" strokeWidth="2.400" /></> },
    { label: '账户', icon: <><circle cx="9" cy="5" r="4.500" fill="#b9bfd0" /><path d="M0 21q1-10 9-10 5 0 7 4h-4v6z" fill="#b9bfd0" /><text x="9" y="22" fontSize="13" fontWeight="700" fill="#b9bfd0" stroke="#fff" strokeWidth="2" paintOrder="stroke">16</text></> },
    { label: '皮肤', icon: <path d="M8 2q4 3 8 0l7 4-2 6-3-1v12H6V11l-3 1-3-6z" fill={c} /> },
    { label: '工具箱', icon: <><rect x="2" y="2" width="9" height="9" rx="1.500" fill={c} /><rect x="14" y="3" width="7" height="7" rx="1.500" stroke={c} strokeWidth="2" /><rect x="2" y="13" width="9" height="9" rx="1.500" fill={c} /><rect x="13" y="13" width="9" height="9" rx="1.500" fill={c} /></> },
  ]
  return (
    <div className="absolute top-[579px] left-[1424px] flex h-[38px] items-center border border-[#777] bg-white pl-[23px]">
      <svg className="absolute top-[-5px] left-[-22px]" width="46" height="46" viewBox="0 0 46 46" aria-hidden="true">
        <path d="M6 5L33 1q4 0 5 4l6 26q1 4-3 6L14 43q-5 1-6-4L1 11Q1 6 6 5z" fill="url(#sogou)" />
        <path d="M36 11Q14 9 11 17c-2 8 20 5 19 11-1 5-12 5-20 6" stroke="#fff" strokeWidth="5.500" fill="none" />
      </svg>
      <button type="button" className="w-[36px] text-[21px] leading-6 font-black text-[#1a6dcc]">英</button>
      {items.map((t) => (
        <ToolBtn key={t.label} label={t.label} className="w-[33px]">
          <svg width="24" height="24" viewBox="0 0 24 24" fill="none" className="overflow-visible">{t.icon}</svg>
        </ToolBtn>
      ))}
    </div>
  )
}

function NavBar() {
  return (
    <div className="absolute top-[35px] right-[16px] flex h-[194px] w-[48px] flex-col items-end rounded-[4px] border-2 border-[#777] bg-[#9b9b9b] px-1 pt-[3px]" aria-label="导航栏">
      <svg width="38" height="182" viewBox="0 0 38 182" fill="none" stroke="#828282" strokeWidth="1.500">
        <circle cx="32" cy="5" r="5" fill="#888" /><path d="M30 3l4 4M34 3l-4 4" stroke="#bbb" />
        <path d="M0 12.500h38M12 64.500h26" stroke="#8c8c8c" strokeWidth="1" />
        <path d="M28 40V24H13a13 13 0 0 0-7 22" /><circle cx="15" cy="36" r="6.500" /><path d="M9 41l-4 5" />
        <text x="18" y="56" fontSize="14" stroke="none" fill="#7a7a9c" fontFamily="Liberation Sans">2D</text>
        <path d="M12 102l-9-11q-3-5 1-4l6 5-3-14q1-3 4 0l3 10 0-15q2-3 4 0l1 14 4-13q3-2 4 1l-3 15 6-5q4-1 3 2l-7 12-3 4z" strokeWidth="2" />
        <path d="M3 113l22 22M25 113L3 135M2 118v-5h5M21 113h5v5M2 130v5h5" strokeWidth="2" />
        <circle cx="26" cy="136" r="7" fill="#b2b2b2" /><path d="M30 141l6 6" strokeWidth="4" />
        <path d="M16 159h8l-4 5z" fill="#777" stroke="none" />
        <circle cx="32" cy="178" r="4" />
      </svg>
    </div>
  )
}

function Workspace() {
  return (
    <main className="relative min-h-0 flex-1 overflow-hidden bg-[#8a8a8a]">
      <div className="absolute top-[35px] left-[479px] shadow-[0_0_5px_rgba(60,60,60,.5)]">
        <Drawing />
      </div>

      <svg className="absolute bottom-[14px] left-[10px]" width="80" height="134" fill="none" stroke="#1f46cf" strokeWidth="1.300" aria-hidden="true">
        <path d="M2.500 1.500V132.500H77zM2.500 119.500h12v13M4 37l9 9 9-9M13 46v10M46 112l19 20M65 112L46 132" />
      </svg>

      <div className="absolute top-[11px] right-[25px] flex items-center gap-[9px]">
        <ToolBtn label="最小化图形" className="w-[20px]"><svg width="20" height="18"><path d="M1 9h17v5H1z" fill="#fff" stroke="#333" /></svg></ToolBtn>
        <ToolBtn label="还原图形" className="w-[20px]"><svg width="20" height="18" fill="none"><path d="M6 3h10v9" stroke="#333" strokeWidth="4" /><path d="M3 6h10v9H3z" stroke="#333" strokeWidth="5" /><path d="M6 3h10v9M3 6h10v9H3z" stroke="#fff" strokeWidth="2.200" /></svg></ToolBtn>
        <ToolBtn label="关闭图形" className="w-[20px]"><svg width="20" height="18"><path d="M4 3l10 12M14 3L4 15" stroke="#333" strokeWidth="6" /><path d="M4 3l10 12M14 3L4 15" stroke="#fff" strokeWidth="3.500" /></svg></ToolBtn>
      </div>

      <NavBar />

      <div className="absolute inset-y-0 right-0 flex w-[14px]">
        <div className="w-[9px] bg-linear-to-b from-[#a9c9ee] via-[#b3cde6] to-[#b3cde6]" />
        <div className="w-[2px] bg-[#38d6ff]" />
        <div className="w-[3px] bg-[#33383d]" />
        <div className="absolute top-[360px] right-0 flex h-[88px] w-[14px] justify-end rounded-l-[4px] bg-[#3d4a63] pr-[2px]">
          <div className="mt-[11px] h-[67px] w-[6px] bg-[repeating-linear-gradient(to_bottom,transparent_0_2px,#3d4a63_2px_3px),linear-gradient(to_bottom,#25304a_40%,#d0b84a_42%,#3fb8a0)]" />
        </div>
      </div>

      <Ime />

      <div className="absolute bottom-[3px] left-[382px] flex h-[40px] w-[1155px] items-stretch rounded-[4px] border-t-[3px] border-[#999] bg-[#dcdcdc]">
        <div className="flex w-[80px] items-center gap-[9px] rounded-l-[4px] bg-linear-to-b from-[#858585] to-[#565656] pl-[10px]">
          <svg width="3" height="28" aria-hidden="true"><path d="M1.500 0v28" stroke="#ccc" strokeWidth="2" strokeDasharray="2 2" /></svg>
          <ToolBtn label="关闭命令行"><svg width="14" height="14"><path d="M1 1l12 12M13 1L1 13" stroke="#f0f0f0" strokeWidth="2.800" /></svg></ToolBtn>
          <ToolBtn label="自定义" className="ml-[4px]"><Icon><path d="M8 1q6 0 7 5l-1 4 8 9q1 4-3 4l-9-9q-5 1-8-3-1-3 0-5l4 4 4-1 1-4z" fill="#dcdcdc" stroke="#4a4a4a" strokeWidth=".8" /></Icon></ToolBtn>
        </div>
        <label className="flex flex-1 items-center pl-[8px]">
          <svg width="23" height="21" fill="none" aria-hidden="true"><rect x=".5" y=".5" width="22" height="20" rx="2" fill="#b8bcc6" stroke="#8c8f98" /><path d="M5 6l5 4-5 4M11 15h6" stroke="#333" strokeWidth="1.800" /></svg>
          <span className="mx-[5px] flex"><Tri color="#777" /></span>
          <input aria-label="命令" placeholder="键入命令" className="ml-[7px] h-full min-w-0 flex-1 bg-transparent text-[20px] italic outline-none placeholder:text-[#8c8c8c]" />
        </label>
        <ToolBtn label="命令历史" className="mr-[4px]"><svg width="12" height="6"><path d="M0 6h12L6 0z" fill="#333" /></svg></ToolBtn>
      </div>
    </main>
  )
}

const layoutTabs = [
  { name: '模型', className: 'w-[72px]', w: 72 },
  { name: '布局1', className: 'w-[80px]', w: 80, active: true },
  { name: '布局2', className: 'w-[84px]', w: 84 },
]

function Cell({ label, on, sep, className, children }: { label: string; on?: boolean; sep?: boolean; className: string; children: ReactNode }) {
  return (
    <button
      type="button"
      aria-label={label}
      aria-pressed={on}
      className={clsx('flex h-full shrink-0 items-center justify-center p-px', sep && 'border-r border-[#7a7a7a]', className)}
    >
      <span className={clsx('flex size-full items-center justify-center', on && 'bg-[#5c8cc6] outline-1 outline-[#2f4a6e]')}>{children}</span>
    </button>
  )
}

function Group({ children }: { children: ReactNode }) {
  return <div className="flex shrink-0 border border-[#7a7a7a] bg-[#4f4f4f]">{children}</div>
}

const W = '#fff'

function StatusBar() {
  return (
    <footer className="flex h-[42px] items-stretch border-t-2 border-[#5c5c5c] bg-[#383838] text-[18px]">
      <div className="flex items-start pl-[14px] text-[#b4b4b4]">
        {layoutTabs.map((t) => (
          <button key={t.name} type="button" className={clsx('relative h-[26px] pb-1 leading-[22px]', t.className, t.active && 'font-bold text-white')}>
            <svg className="absolute inset-0" width={t.w} height="26" viewBox="0 0 80 26" preserveAspectRatio="none" aria-hidden="true">
              <path d="M0 0Q6 2 8 10l3 10q1 5 5 5h49q4 0 5-5l3-10q2-8 7-10z" fill={t.active ? '#777' : '#505050'} stroke={t.active ? '#909090' : '#666'} strokeWidth=".8" />
            </svg>
            <span className="relative">{t.name}</span>
          </button>
        ))}
        <button type="button" aria-label="新建布局" className="ml-[5px]">
          <svg width="34" height="25" fill="none"><path d="M33 0q0 18-10 23H3q-2 0-2-3Q4 3 12 0z" fill="#4c4c4c" stroke="#666" /><path d="M18 6v12M12 12h12" stroke="#ccc" strokeWidth="2.600" /></svg>
        </button>
      </div>

      <div className="ml-auto flex items-stretch gap-[2px] text-white">
        <Group><span className="flex w-[228px] items-center justify-center text-[17px] font-semibold whitespace-nowrap">206.6626, 61.3584, 0.0000</span></Group>
        <Group><button type="button" className="w-[43px] overflow-hidden pl-[6px] text-left font-medium whitespace-nowrap">图纸</button></Group>
        <Group>
          <Cell label="捕捉" sep className="w-[38px]"><Icon><path d="M11 1h11v9H11zM11 10v6" stroke={W} strokeWidth="1.200" /><path d="M1 15h11v9H1z" fill={LIGHT} /></Icon></Cell>
          <Cell label="动态输入" on sep className="w-[38px]"><Icon><path d="M6 3v11M0 8.500h12" stroke={W} strokeWidth="1.300" /><path d="M10 16h14v5H10z" fill={W} stroke={W} /><path d="M10.500 16.500h3v4h-3z" fill="#3f6cae" /></Icon></Cell>
          <Cell label="正交" className="w-[36px]"><Icon><path d="M1 0v23h23M1 16h7v7" stroke={LIGHT} strokeWidth="1.300" /></Icon></Cell>
          <Cell label="极轴追踪" on className="w-[37px]"><Icon><path d="M20 8a10 10 0 1 0 0 7" stroke={W} strokeWidth="1.400" /><path d="M10 12L20 1M10 12h14M16 8q3 4 0 8" stroke={W} strokeWidth="1.300" /></Icon></Cell>
          <Cell label="极轴设置" className="w-[23px]"><Tri w={10} h={6} /></Cell>
          <Cell label="等轴测草图" className="w-[35px]"><Icon><path d="M3 2l18 19" stroke="#c96a6a" strokeWidth="1.200" /><path d="M12 0v24" stroke={GREEN} strokeWidth="1.200" /><path d="M10 10h4v4h-4z" fill="#4f4f4f" stroke={W} /></Icon></Cell>
          <Cell label="等轴测设置" sep className="w-[23px]"><Tri w={10} h={6} /></Cell>
          <Cell label="对象捕捉追踪" on className="w-[37px]"><Icon><path d="M19 3L2 21h22" stroke={W} strokeWidth="1.300" /><circle cx="9" cy="12" r="2.400" fill={W} /></Icon></Cell>
          <Cell label="对象捕捉" on className="w-[36px]"><Icon><path d="M10 4h12v19H4V9" stroke={W} strokeWidth="1.300" /><path d="M1 1h6v6H1z" stroke={W} strokeWidth="1.400" /></Icon></Cell>
          <Cell label="捕捉设置" sep className="w-[23px]"><Tri w={10} h={6} /></Cell>
          <Cell label="线宽" sep className="w-[38px]"><Icon><path d="M12 4h12M12 11h12M12 18h12" stroke={W} /><path d="M0 4h13M0 11h13" stroke={LIGHT} strokeWidth="3.500" /><path d="M0 19h13" stroke={LIGHT} strokeWidth="5" /></Icon></Cell>
          <Cell label="透明度" on sep className="w-[38px]"><Icon><path d="M1 1h22v22H1z" stroke={W} strokeWidth="1.400" />{[0, 1, 2, 3, 4].map((r) => <path key={r} d={`M${r % 2 ? 6 : 2} ${4 + r * 4}H22`} stroke={W} strokeWidth="4" strokeDasharray="4 4" />)}</Icon></Cell>
          <Cell label="选择循环" className="w-[38px]"><Icon><path d="M4 0v7M0 3.500h8" stroke={W} strokeWidth="1.200" /><path d="M6 20V8h14" stroke={W} strokeWidth="1.200" /><path d="M9 10h15v14H9z" fill="#79cf9f" /></Icon></Cell>
        </Group>
        <Group>
          <Cell label="注释可见性" className="w-[37px]"><Icon><path d="M8 1h16v22H1V8" stroke={LIGHT} strokeWidth="1.200" strokeDasharray="4 2" /><path d="M0 0h6L0 6zM2 2l5 5" fill={W} stroke={W} /><path d="M10 11h10v10H10z" stroke={LIGHT} strokeWidth="1.300" /></Icon></Cell>
          <Cell label="自动缩放" className="w-[36px]"><Icon><path d="M11 0l3 14 8 9-5-1-6-4-6 4-5 1 8-9z" fill={LIGHT} /><circle cx="20" cy="5" r="4" stroke={LIGHT} strokeWidth="1.300" /></Icon></Cell>
          <Cell label="注释比例" className="w-[36px]"><Icon><path d="M11 0l3 14 8 9-5-1-6-4-6 4-5 1 8-9z" fill={LIGHT} /><path d="M22 0l-6 7h4l-2 6 6-8h-4z" fill={LIGHT} /></Icon></Cell>
        </Group>
        <Group>
          <Cell label="切换工作空间" className="w-[38px]"><Icon><circle cx="12" cy="12" r="6.500" stroke={LIGHT} strokeWidth="5" /><path d="M12 0v4M12 20v4M0 12h4M20 12h4M3.500 3.500l3 3M17.500 17.500l3 3M3.500 20.500l3-3M17.500 6.500l3-3" stroke={LIGHT} strokeWidth="4" /></Icon></Cell>
          <Cell label="工作空间列表" sep className="w-[22px]"><Tri w={10} h={6} /></Cell>
          <Cell label="注释监视器" className="w-[38px]"><Icon><path d="M12 1v22M1 12h22" stroke={LIGHT} strokeWidth="2.600" /></Icon></Cell>
        </Group>
        <Group><Cell label="快捷特性" className="w-[38px]"><Icon><path d="M3 1h18v22H3z" stroke={W} strokeWidth="1.300" /><path d="M3 3h18" stroke={W} strokeWidth="3" /><path d="M6 9h3M11 9h8M6 14h3M11 14h8M6 19h3M11 19h8" stroke={W} strokeWidth="1.800" /></Icon></Cell></Group>
        <Group>
          <Cell label="锁定界面" className="w-[38px]"><Icon><path d="M10 18H1V1h20v9" stroke={LIGHT} strokeWidth="1.300" /><path d="M1 3h20" stroke={LIGHT} strokeWidth="2.500" /><path d="M11 16h10v8H11z" fill={W} /><path d="M19 16v-2q0-3 2.500-3t2.500 3" stroke={W} strokeWidth="1.300" /></Icon></Cell>
          <Cell label="锁定列表" sep className="w-[22px]"><Tri w={10} h={6} /></Cell>
          <Cell label="隔离对象" className="w-[38px]"><Icon><path d="M1 1h9v9H1z" stroke={LIGHT} strokeWidth="1.200" /><circle cx="18" cy="12" r="5" stroke={LIGHT} strokeWidth="1.200" /><path d="M10 15l5 8H5z" stroke={LIGHT} strokeWidth="1.200" /></Icon></Cell>
        </Group>
        <Group><Cell label="图形性能" on className="w-[38px]"><Icon><circle cx="12" cy="12" r="11" fill="#87abd8" stroke={W} strokeWidth="1.400" /><path d="M18 7l-9 10q-1 1-1 3l3-1z" fill={W} /></Icon></Cell></Group>
        <Group>
          <Cell label="图纸信任" className="w-[41px]">
            <Icon size={34} box={34}><path d="M3 1h17l7 7v22H3z" fill="#62abe8" /><path d="M20 1v7h7z" fill="#fff" /><path d="M9 0v23M0 14h27" stroke="#cfe8ff" strokeWidth="1.500" /><path d="M6 11h6v6H6z" fill="#62abe8" stroke="#fff" /><path d="M2 22q7-4 14 8H2z" fill="#fdd840" /><path d="M17 24l6 7 9-13" stroke="#22a04a" strokeWidth="4" /></Icon>
          </Cell>
          <Cell label="图形监视" className="w-[40px]"><Icon><path d="M1 1h21v16l-5 4H1z" fill="#f4f4f4" /><path d="M1 16l6-12 5 9 4-7 6 9" stroke="#333" /><path d="M6 4h3v3H6z" fill="#1e6fd0" /><path d="M17 9l7 15H10z" fill="#e98237" /><path d="M17 14v5M17 21v1.500" stroke="#fff" strokeWidth="1.500" /></Icon></Cell>
          <Cell label="视口" className="w-[44px]"><Icon><path d="M1 3h9v8h13v11H1z" stroke="#eaa06f" strokeWidth="1.300" /></Icon></Cell>
        </Group>
        <div className="-ml-[2px] flex border border-r-0 border-[#7a7a7a] bg-[#4f4f4f]">
          <Cell label="全屏显示" className="w-[38px]"><Icon><path d="M1 3h22v18H1z" stroke={W} strokeWidth="1.300" /><path d="M14 10l4-4M10 14l-4 4" stroke={W} strokeWidth="1.300" /><path d="M15 5h5v5zM4 14v5h5z" fill={W} /></Icon></Cell>
          <Cell label="自定义" className="w-[35px]"><Icon><path d="M0 3h24M0 12h24M0 21h24" stroke={LIGHT} strokeWidth="2.600" /></Icon></Cell>
        </div>
      </div>
    </footer>
  )
}

export default function App() {
  return (
    <div className="h-screen bg-white px-2 pt-2 pb-[9px] font-['Open_Sans','Noto_Sans_CJK_SC',sans-serif]">
      <svg width="0" height="0" className="absolute" aria-hidden="true">
        <defs>
          <radialGradient id="gold" cx=".4" cy=".3" r=".8"><stop offset="0" stopColor="#fbe5a0" /><stop offset=".7" stopColor="#e3bf66" /><stop offset="1" stopColor="#c79d48" /></radialGradient>
          <linearGradient id="tab" x1="0" y1="0" x2="0" y2="1"><stop offset="0" stopColor="#7b7b7b" /><stop offset="1" stopColor="#5c5c5c" /></linearGradient>
          <linearGradient id="sogou" x1="0" y1="0" x2="0" y2="1"><stop offset="0" stopColor="#ff7440" /><stop offset="1" stopColor="#f95306" /></linearGradient>
          <linearGradient id="logo" x1="0" y1="0" x2="0" y2="1"><stop offset="0" stopColor="#e2402c" /><stop offset="1" stopColor="#b32020" /></linearGradient>
        </defs>
      </svg>
      <div className="flex h-full flex-col bg-[#383838] shadow-[0_0_6px_1px_rgba(60,60,70,.7)]">
        <header className="relative">
          <TitleBar />
          <MenuBar />
          <button type="button" aria-label="应用程序菜单" className="absolute top-0 left-0 flex h-[58px] w-[59px] items-start border-r border-b border-[#222] bg-linear-to-b from-[#d0d0d0] to-[#858585]">
            <svg width="58" height="58" viewBox="0 0 58 58" fill="none">
              <path d="M5 40L16 3q1-2 3-2h5q2 0 3 2l12 37q-5 2-8-2L21 10 13 38q-3 5-8 2z" fill="url(#logo)" />
              <path d="M9 32q12-9 25-1l3 8q-14-10-29 0z" fill="#ea6a58" />
              <path d="M22 3l12 36q-3 0-4-3L20 9z" fill="#f05a44" />
              <path d="M45 25h10l-5 6z" fill="#3a3a48" />
            </svg>
          </button>
        </header>
        <Ribbon />
        <div className="h-[3px] border-t border-[#2d2d2d] bg-[#8a8a8a]" />
        <FileTabs />
        <Workspace />
        <StatusBar />
      </div>
    </div>
  )
}
